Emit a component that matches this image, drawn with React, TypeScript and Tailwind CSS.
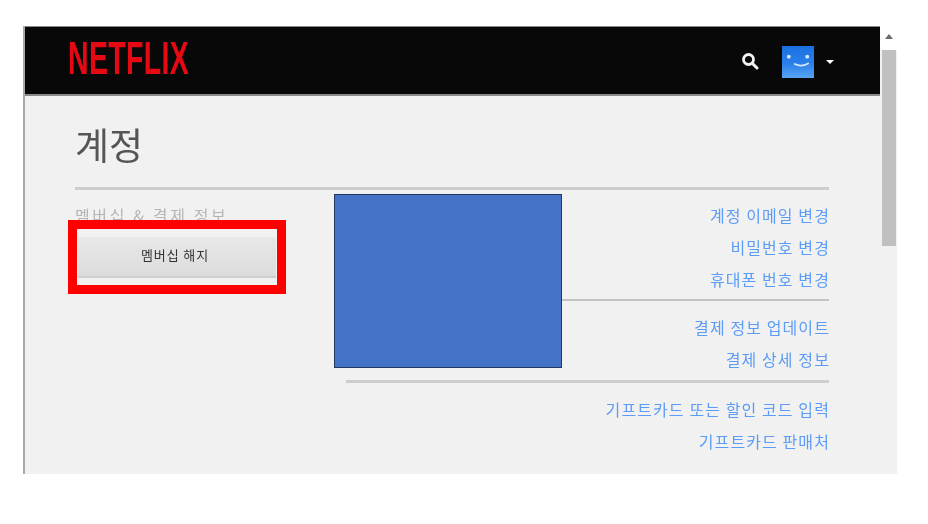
const font = { fontFamily: '"Noto Sans CJK KR", "Liberation Sans", sans-serif' };

const accountLinks = ["계정 이메일 변경", "비밀번호 변경", "휴대폰 번호 변경"];
const billingLinks = ["결제 정보 업데이트", "결제 상세 정보"];
const giftLinks = ["기프트카드 또는 할인 코드 입력", "기프트카드 판매처"];

const LinkGroup = ({ links }: { links: string[] }) => (
  <div className="flex flex-col items-end gap-[8.5px]">
    {links.map((link) => (
      <a
        key={link}
        className="h-[23.5px] text-[16px] leading-[23.5px] tracking-[1.1px] mr-[-1px] text-[#5b9cf8] blur-[0.5px]"
      >
        {link}
      </a>
    ))}
  </div>
);

const Header = () => (
  <header className="h-[70px] bg-[#080808] border-t border-t-[#8a8a8a] border-b-2 border-b-[#8a8a8a] flex items-center shrink-0">
    <div
      className="ml-[43px] w-[120px] mt-[-6px] text-[46px] leading-[50px] font-bold text-[#e50914] origin-left scale-x-[0.62] tracking-[0.5px] blur-[0.4px]"
      style={{ fontFamily: '"Liberation Sans", sans-serif' }}
    >
      NETFLIX
    </div>
    <svg className="ml-auto mt-[1px] blur-[0.4px]" width="18" height="18" viewBox="0 0 18 18" fill="none">
      <circle cx="7.5" cy="7.5" r="5" stroke="#f2f2f2" strokeWidth="2.8" />
      <path d="M11 11l5 5" stroke="#f2f2f2" strokeWidth="3" strokeLinecap="round" />
    </svg>
    <svg className="ml-[23px] mt-[3px] blur-[0.3px]" width="32" height="32" viewBox="0 0 33 33">
      <defs>
        <linearGradient id="face" x1="0" y1="0" x2="0" y2="1">
          <stop offset="0" stopColor="#1b6fe0" />
          <stop offset="0.55" stopColor="#2a80ea" />
          <stop offset="1" stopColor="#58a4f2" />
        </linearGradient>
      </defs>
      <rect width="33" height="33" fill="url(#face)" />
      <circle cx="7" cy="11" r="2" fill="#d6e8fb" />
      <circle cx="26" cy="11" r="2" fill="#d6e8fb" />
      <path d="M13 18.5q7 3.5 14-.5" stroke="#d6e8fb" strokeWidth="1.8" fill="none" strokeLinecap="round" />
    </svg>
    <div className="ml-[12px] mr-[46px] mt-[3px] w-0 h-0 border-x-[4.5px] border-x-transparent border-t-[4.5px] border-t-white" />
  </header>
);

const Scrollbar = () => (
  <div className="w-[17px] bg-[#f1f1f1] flex flex-col shrink-0">
    <div className="h-[24px] bg-white flex items-start pt-[8px] justify-center">
      <div className="w-0 h-0 border-x-[4px] border-x-transparent border-b-[5px] border-b-[#6a6a6a]" />
    </div>
    <div className="h-[196px] mr-[1px] ml-[2px] bg-[#c0c0c0]" />
  </div>
);

export default function App() {
  return (
    <div className="relative w-[928px] h-[524px] bg-white overflow-hidden" style={font}>
      <div className="ml-[23px] pt-[26px]">
        <div className="flex w-[874px] h-[448px] border-l-2 border-[#a9a9a9]">
          <div className="flex-1 flex flex-col bg-[#f1f1f1]">
            <Header />
            <main className="pl-[50px] pr-[51px]">
              <h1 className="mt-[23px] h-[68px] text-[37px] leading-[50px] text-[#555] blur-[0.4px]">계정</h1>
              <div className="flex border-t-[3px] border-[#cdcdcd]">
                <section className="w-[271px] shrink-0">
                  <h2 className="mt-[14px] h-[22px] text-[16px] leading-[22px] tracking-[2.6px] text-[#b5b5b5] blur-[0.5px]">
                    멤버십 &amp; 결제 정보
                  </h2>
                  <button className="block mt-[11px] ml-[3px] w-[198px] h-[41px] pr-[4px] pb-[4px] border-b-2 border-[#cfcfcf] bg-gradient-to-b from-[#e8e8e8] to-[#dcdcdc] text-[13px] text-[#333] tracking-[0.9px] blur-[0.4px]">
                    멤버십 해지
                  </button>
                </section>
                <section className="flex-1 pt-[14px]">
                  <LinkGroup links={accountLinks} />
                  <div className="mt-[7px] mb-[15px] border-t-2 border-[#c4c4c4]" />
                  <LinkGroup links={billingLinks} />
                  <div className="mt-[9px] mb-[15px] border-t-[3px] border-[#cdcdcd]" />
                  <LinkGroup links={giftLinks} />
                </section>
              </div>
            </main>
          </div>
          <Scrollbar />
        </div>
      </div>
      {/* annotations drawn over the screenshot */}
      <div className="absolute left-[68px] top-[220px] w-[218px] h-[74px] border-[9px] border-[#ff0000]" />
      <div className="absolute left-[334px] top-[194px] w-[228px] h-[174px] bg-[#4472c4] border border-[#1f3864]" />
    </div>
  );
}
